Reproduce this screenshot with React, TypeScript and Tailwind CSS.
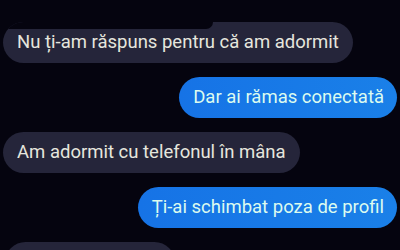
import React from 'react';

type Msg = { text: string; mine: boolean };

const messages: Msg[] = [
  { text: 'Nu ți-am răspuns pentru că am adormit', mine: false },
  { text: 'Dar ai rămas conectată', mine: true },
  { text: 'Am adormit cu telefonul în mâna', mine: false },
  { text: 'Ți-ai schimbat poza de profil', mine: true },
];

function Bubble({ msg, first }: { msg: Msg; first: boolean }) {
  if (msg.mine) {
    return (
      <div className="flex justify-end pr-[3px]">
        <div className="flex h-[41px] items-center rounded-full bg-gradient-to-r from-[#1673e6] to-[#1a80e8] pl-[14px] pr-[13px] text-[#dcfbef]">
          {msg.text}
        </div>
      </div>
    );
  }
  return (
    <div className="flex justify-start pl-[3px]">
      <div className="relative flex h-[41px] items-center overflow-hidden rounded-full bg-[#25253a] px-[14px] text-[#e6e6de]">
        {first && (
          <div className="absolute left-0 top-0 h-[7px] w-[210px] rounded-br-[8px] bg-[#05040f]" />
        )}
        <span className="relative">{msg.text}</span>
      </div>
    </div>
  );
}

export default function App() {
  return (
    <div
      className="h-[250px] w-[400px] overflow-hidden bg-[#05040f] pt-[22px] text-[18.5px] leading-none"
      style={{ fontFamily: 'Roboto, "Noto Sans", sans-serif' }}
    >
      <div className="flex flex-col gap-[14px]">
        {messages.map((m, i) => (
          <Bubble key={i} msg={m} first={i === 0} />
        ))}
        {/* next incoming message, cut off at the bottom */}
        <div className="flex justify-start pl-[5px]">
          <div className="h-[41px] w-[170px] rounded-full bg-[#25253a]" />
        </div>
      </div>
    </div>
  );
}
